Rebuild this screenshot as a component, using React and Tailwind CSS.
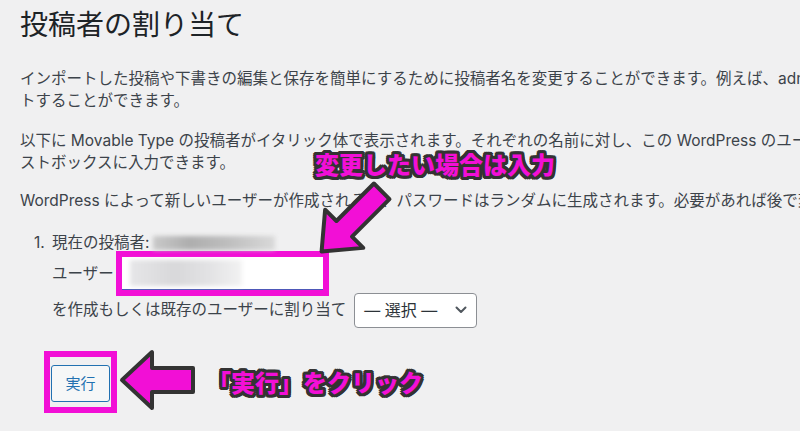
import React from "react";

const outline =
  "[text-shadow:3px_0_0_#333,-3px_0_0_#333,0_3px_0_#333,0_-3px_0_#333,2px_2px_0_#333,-2px_2px_0_#333,2px_-2px_0_#333,-2px_-2px_0_#333,3px_2px_0_#333,-3px_2px_0_#333,3px_-2px_0_#333,-3px_-2px_0_#333,2px_3px_0_#333,-2px_3px_0_#333,2px_-3px_0_#333,-2px_-3px_0_#333]";

const App = () => {
  return (
    <div className="relative w-[800px] h-[431px] overflow-hidden bg-[#f0f0f1] pl-5 text-[#3c434a] font-['Inter','Noto_Sans_CJK_JP',sans-serif]">
      <h1 className="pt-[8px] text-[28px] leading-[35px] font-normal text-[#1d2327] whitespace-nowrap">投稿者の割り当て</h1>

      <div className="mt-[25px] text-[15.5px] leading-[22px] whitespace-nowrap">
        <p>インポートした投稿や下書きの編集と保存を簡単にするために投稿者名を変更することができます。例えば、admin を実際の名前に変更してインポー</p>
        <p>トすることができます。</p>
      </div>

      <div className="mt-[18px] text-[15.5px] leading-[22px] whitespace-nowrap">
        <p>以下に Movable Type の投稿者がイタリック体で表示されます。それぞれの名前に対し、この WordPress のユーザーをメニューから選択するか、テキ</p>
        <p>ストボックスに入力できます。</p>
      </div>

      <p className="mt-[16px] text-[15.5px] leading-[22px] whitespace-nowrap">
        WordPress によって新しいユーザーが作成されると、パスワードはランダムに生成されます。必要があれば後で変更してください。
      </p>

      <div className="mt-[20px] flex text-[15.5px] leading-[22px] whitespace-nowrap">
        <span className="w-[32px] pl-[14px]">1.</span>
        <div>
          <div className="flex items-center">
            <span>現在の投稿者:</span>
            <span className="ml-[4px] inline-block w-[122px] h-[14px] bg-[linear-gradient(90deg,#c9c9c9,#aeaeae_30%,#bdbdbd_60%,#d9d9d9)] blur-[2px]"></span>
          </div>
          <div className="mt-[2px] h-[35px] flex items-center">
            <span>ユーザー</span>
            <div className="ml-[8px] w-[201px] h-[33px] bg-white border-b border-[#4e58b8] outline-[6px] outline-solid outline-[#f20fd6] flex items-center px-[8px]">
              <span className="block w-[112px] h-[26px] bg-[linear-gradient(90deg,#e6e6e8,#d8d8da_40%,#e2e2e4_70%,#f2f2f2)] blur-[2px]"></span>
            </div>
          </div>
          <div className="mt-[1px] h-[36px] flex items-center">
            <span>を作成もしくは既存のユーザーに割り当て</span>
            <div className="ml-[8px] w-[123px] h-[35px] bg-white border border-[#8c8f94] rounded-[4px] flex items-center justify-between pl-[9px] pr-[9px] text-[16px] text-[#2c3338]">
              <span>— 選択 —</span>
              <svg width="12" height="8" viewBox="0 0 12 8" fill="none">
                <path d="M1.5 1.5L6 6l4.5-4.5" stroke="#50575e" strokeWidth="2" strokeLinecap="round" strokeLinejoin="round" />
              </svg>
            </div>
          </div>
        </div>
      </div>

      <div className="mt-[23px] ml-[24px] inline-block border-[6px] border-[#f20fd6] pt-[8px] pb-[5px] px-[1px]">
        <button className="block w-[59px] h-[37px] bg-[#f6f7f7] border border-[#2271b1] rounded-[3px] text-[15px] text-[#2271b1] font-['Noto_Sans_CJK_JP',sans-serif]">
          実行
        </button>
      </div>

      <svg className="absolute left-[117px] top-[348px]" width="82" height="64" viewBox="0 0 82 64">
        <polygon points="5,32 35,4 35,20 76,20 76,44 35,44 35,60" fill="#f20fd6" stroke="#333" strokeWidth="4" strokeLinejoin="round" />
      </svg>

      <svg className="absolute left-[295px] top-[165px]" width="115" height="115" viewBox="0 0 115 115">
        <g transform="translate(57 56) rotate(-45)">
          <polygon points="-43,0 -11,-27 -11,-11 42,-11 42,11 -11,11 -11,27" fill="#f20fd6" stroke="#333" strokeWidth="4" strokeLinejoin="round" />
        </g>
      </svg>

      <div className={`absolute left-[315px] top-[149px] text-[24px] leading-[30px] font-black text-[#f20fd6] whitespace-nowrap font-['Noto_Sans_CJK_JP',sans-serif] ${outline}`}>
        変更したい場合は入力
      </div>

      <div className={`absolute left-[207px] top-[367px] text-[24px] leading-[30px] font-black text-[#f20fd6] whitespace-nowrap font-['Noto_Sans_CJK_JP',sans-serif] ${outline}`}>
        「実行」をクリック
      </div>
    </div>
  );
};

export default App;
